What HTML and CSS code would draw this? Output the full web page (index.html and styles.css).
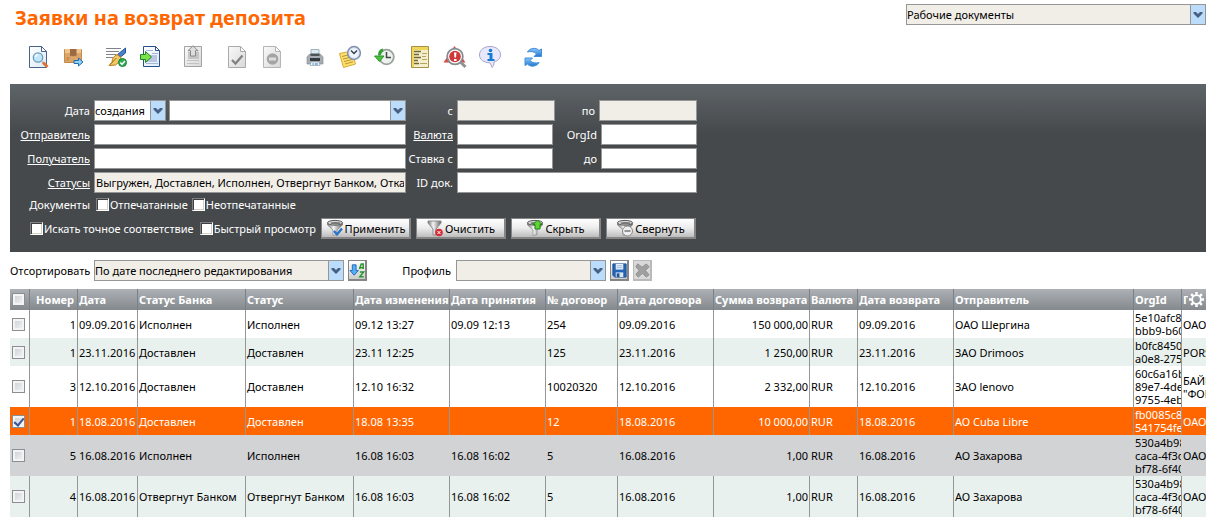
FILE: index.html
```html
<!DOCTYPE html>
<html lang="ru">
<head>
<meta charset="utf-8">
<title>Заявки на возврат депозита</title>
<link rel="stylesheet" href="styles.css">
</head>
<body>
<svg class="defs" width="0" height="0" aria-hidden="true">
  <defs>
    <linearGradient id="paper" x1="0" y1="0" x2="1" y2="1"><stop offset="0" stop-color="#fff"/><stop offset="1" stop-color="#dcebf8"/></linearGradient>
    <linearGradient id="paperGray" x1="0" y1="0" x2="1" y2="1"><stop offset="0" stop-color="#fafafa"/><stop offset="1" stop-color="#d8d8d8"/></linearGradient>
    <linearGradient id="blue" x1="0" y1="0" x2="0" y2="1"><stop offset="0" stop-color="#8cc8fa"/><stop offset="1" stop-color="#2277d0"/></linearGradient>
    <linearGradient id="metal" x1="0" y1="0" x2="1" y2="0"><stop offset="0" stop-color="#777"/><stop offset=".4" stop-color="#f4f4f4"/><stop offset="1" stop-color="#666"/></linearGradient>
    <symbol id="chevron" viewBox="0 0 14 19"><path d="M2.500 7H5l2 2 2-2h2.500v1.500L7 13 2.500 8.500z" fill="#476083"/></symbol>
    <symbol id="funnel" viewBox="0 0 18 18"><path d="M1.500 4v2l5.500 5v5.500l4-1v-4.500L16.500 6V4z" fill="url(#metal)" stroke="#777" stroke-width=".6"/><ellipse cx="9" cy="3.800" rx="7.500" ry="2.400" fill="#d8d8d8" stroke="#555"/><ellipse cx="9.500" cy="4.200" rx="5" ry="1.200" fill="#777"/></symbol>
  </defs>
</svg>

<header class="top">
  <h1 class="title">Заявки на возврат депозита</h1>
  <div class="combo combo-muted combo-docs">
    <select aria-label="Раздел документов"><option>Рабочие документы</option></select>
    <svg class="arrow"><use href="#chevron"/></svg>
  </div>
</header>

<nav class="toolbar" aria-label="Действия">
  <div class="tool-group">
    <button class="tool" aria-label="Просмотр"><svg viewBox="0 0 24 24"><path d="M3.500 1.500h12l5 5v16h-17z" fill="url(#paper)" stroke="#4b6389"/><path d="M15.500 1.500v5h5z" fill="#fff" stroke="#4b6389"/><circle cx="12" cy="12.500" r="4.700" fill="#bfe6fa" stroke="#6f9db8" stroke-width="1.300"/><path d="M9.500 12c.3-1.500 1.300-2.300 2.700-2.300" stroke="#fff" fill="none" stroke-width="1.300"/><path d="M15.500 16l1.500 1.500" stroke="#b8c4cc" stroke-width="2"/><path d="M17 17.500l4.500 4.500" stroke="#dd7032" stroke-width="2.800"/></svg></button>
    <button class="tool" aria-label="Отправить"><svg viewBox="0 0 24 24"><path d="M3.500 4.500h17v13h-17z" fill="#dba668" stroke="#c28a4c"/><path d="M4 4h16v4H4z" fill="#f0c48e"/><path d="M9 4h6.500v7.500L14 10.500l-1.700 1-1.600-1-1.700 1z" fill="#9b6a43"/><path d="M5.500 13h3m-3 2h2" stroke="#b47a3c"/><path d="M13 15.500h4.500v-2.500l4.500 4-4.500 4v-2.500H13z" fill="#8ed0fa" stroke="#236eb0"/></svg></button>
  </div>
  <div class="tool-group">
    <button class="tool" aria-label="Подписать"><svg viewBox="0 0 24 24"><path d="M2 3.500h15M2 6.500h13M2 9.500h10M2 12.500h7" stroke="#808488"/><path d="M21.500 3v5l-5 4-3-2.500z" fill="#4c80cc" stroke="#24549b"/><path d="M13 9.500l4 3-1.500 4-4 3.500-6.500.5 3-3c0-4 2-6.500 5-8z" fill="#f3c967" stroke="#bd7c16"/><path d="M6 19.500l6.500-6.500" stroke="#9b6a13"/><circle cx="18.500" cy="17.500" r="4" fill="#2cad4c" stroke="#158536"/><path d="M16.300 17.500l1.700 1.800 3-3.300" fill="none" stroke="#fff" stroke-width="1.500"/></svg></button>
    <button class="tool" aria-label="Импорт"><svg viewBox="0 0 24 24"><path d="M4.500 1.500h12l4 4v16h-16z" fill="url(#paper)" stroke="#29508b"/><path d="M16.500 1.500v4h4z" fill="#fff" stroke="#29508b"/><path d="M7 5.500h7M13 8.500h6M7 18.500h12" stroke="#a5b6d8"/><path d="M8 10h10v7H8z" fill="#b8c5e3"/><path d="M1.500 9.500h5V6.500l6 5.500-6 5.500v-3h-5z" fill="#7be34a" stroke="#238626"/></svg></button>
  </div>
  <div class="tool-group">
    <button class="tool" aria-label="Экспорт" disabled><svg viewBox="0 0 24 24"><path d="M2.500 1.500h17v20h-17z" fill="url(#paperGray)" stroke="#a3a3a3"/><path d="M5 15.500h12M5 18.500h12" stroke="#c3c3c3"/><path d="M6 7h11v7H6z" fill="#c5c5c5"/><path d="M11 .7l5 5h-2.500V11h-5V5.700H6z" fill="#ddd" stroke="#888"/></svg></button>
  </div>
  <div class="tool-group">
    <button class="tool" aria-label="Проверить" disabled><svg viewBox="0 0 24 24"><path d="M3.500 1.500h12l5 5v16h-17z" fill="url(#paperGray)" stroke="#aaa"/><path d="M15.500 1.500v5h5z" fill="#fff" stroke="#aaa"/><path d="M7 15l3.500 3.500 7-8" fill="none" stroke="#828282" stroke-width="2.300"/></svg></button>
    <button class="tool" aria-label="Отозвать" disabled><svg viewBox="0 0 24 24"><path d="M3.500 1.500h12l5 5v16h-17z" fill="url(#paperGray)" stroke="#b5b5b5"/><path d="M15.500 1.500v5h5z" fill="#fff" stroke="#b5b5b5"/><circle cx="12.500" cy="14" r="5.800" fill="#a5a5a5"/><path d="M9 12.500h7v3H9z" fill="#ddd"/></svg></button>
  </div>
  <div class="tool-group">
    <button class="tool" aria-label="Печать"><svg viewBox="0 0 24 24"><path d="M8 4.500h8v7H8z" fill="#dceaf1" stroke="#a0b2bb"/><path d="M6 9.500h12l2 2.500v7H4v-7z" fill="#a6acb1" stroke="#8a9197" stroke-width=".7"/><path d="M7.500 8.500h9V11h-9z" fill="#4c5357"/><path d="M7 13h10v3H7z" fill="#353a3e"/><path d="M8 17h8l1 3.500H7z" fill="#f7fbff" stroke="#91a0a8" stroke-width=".7"/><path d="M9 19h2.500" stroke="#23b5cf"/><path d="M12 19h3" stroke="#2e6ad0"/></svg></button>
    <button class="tool" aria-label="Запланировать"><svg viewBox="0 0 24 24"><path d="M1.500 8.500l12-2.500 4 13-12 3.500z" fill="#ffe06c" stroke="#d4ab35"/><path d="M4 11.500l8-2M5 14l9-2M6 16.500l9-2.200M7 19l8-2.200" stroke="#b99336"/><circle cx="16" cy="8" r="6.400" fill="#d7e3f5" stroke="#8091ad" stroke-width="1.500"/><circle cx="16" cy="8" r="4.500" fill="#f0f5fc"/><path d="M13 5.500l3 3 3-3" fill="none" stroke="#303a4c" stroke-width="1.300"/></svg></button>
    <button class="tool" aria-label="История"><svg viewBox="0 0 24 24"><circle cx="13.500" cy="12" r="7.300" fill="#edf2ef" stroke="#9aa39e" stroke-width="1.800"/><path d="M13.500 7v5.500H18" fill="none" stroke="#444" stroke-width="1.500"/><path d="M10 5C8 5.500 6.500 7.500 6.500 10" fill="none" stroke="#33a32f" stroke-width="3"/><path d="M1.500 11h9.500l-4.500 5.500z" fill="#48c33d" stroke="#2b922a"/></svg></button>
    <button class="tool" aria-label="Реестр"><svg viewBox="0 0 24 24"><path d="M3.500 1.500h17v21h-17z" fill="#f3eecb" stroke="#a89144"/><path d="M4 2h16v3H4zM4 2h2v20H4z" fill="#efd659"/><path d="M6 6.500h7M6 9.500h5M6 12.500h7M6 15.500h4M6 18.500h5" stroke="#746631" stroke-width="1.500"/><path d="M14 8.500h5M14 11.500h4M14 14.500h5M12 18.500h7" stroke="#b5a461"/></svg></button>
    <button class="tool" aria-label="Найти ошибки"><svg viewBox="0 0 24 24"><path d="M11.500 1l11 16.500h-22z" fill="#db4947"/><circle cx="12" cy="11.500" r="7.800" fill="#fff" stroke="#858b8e" stroke-width="1.800"/><circle cx="12" cy="11.500" r="5.800" fill="#cf393a"/><path d="M11 7.500h2.500l-.5 5h-1.500zM11 14h2.500v2H11z" fill="#fff"/><path d="M17.500 17l5 5" stroke="#8e9496" stroke-width="3"/></svg></button>
    <button class="tool" aria-label="Справка"><svg viewBox="0 0 24 24"><path d="M12 1.500c6 0 10.500 3.300 10.500 8.300 0 3.500-2.500 6-6.500 7.200.2 2.500-.5 4.500-2 5.500-1-1.800-1-3.500-2-4.700C5.500 17.500 1.500 14.500 1.500 10 1.500 5 6 1.500 12 1.500z" fill="#e8e8fc" stroke="#a6a2c8"/><circle cx="12.500" cy="5.500" r="1.800" fill="#177bd4"/><path d="M9.500 8h5v6h2v2h-7v-2h2v-4h-2z" fill="#177bd4"/></svg></button>
  </div>
  <div class="tool-group">
    <button class="tool" aria-label="Обновить"><svg viewBox="0 0 24 24"><path d="M6.500 7c2-4 8.500-5 11.500-1.500L20.500 4v7.500H13l2.500-2.500C13.500 6.500 9.500 6 6.500 7z" fill="url(#blue)" stroke="#408ed8"/><path d="M18 17.500c-2 4-8.500 5-11.500 1.500L4 20.500V13h7.500L9 15.500c2 2.500 6 3 9 2z" fill="url(#blue)" stroke="#408ed8"/></svg></button>
  </div>
</nav>

<form class="filter">
  <div class="line">
    <label class="name" for="period">Дата</label>
    <div class="wide">
      <div class="combo combo-kind"><select aria-label="Вид даты"><option>создания</option></select><svg class="arrow"><use href="#chevron"/></svg></div>
      <div class="combo combo-fill"><select id="period"><option></option></select><svg class="arrow"><use href="#chevron"/></svg></div>
    </div>
    <label class="name name-mid" for="from">с</label>
    <div class="pair"><input class="field field-date" id="from" readonly><label for="to">по</label><input class="field field-date" id="to" readonly></div>
  </div>
  <div class="line">
    <a class="name" href="#sender">Отправитель</a>
    <input class="field wide" id="sender" aria-label="Отправитель">
    <a class="name name-mid" href="#currency">Валюта</a>
    <div class="pair"><input class="field" id="currency" aria-label="Валюта"><label for="org">OrgId</label><input class="field" id="org"></div>
  </div>
  <div class="line">
    <a class="name" href="#receiver">Получатель</a>
    <input class="field wide" id="receiver" aria-label="Получатель">
    <label class="name name-mid" for="rate">Ставка с</label>
    <div class="pair"><input class="field" id="rate"><label for="rate-to">до</label><input class="field" id="rate-to"></div>
  </div>
  <div class="line">
    <a class="name" href="#statuses">Статусы</a>
    <input class="field wide" id="statuses" aria-label="Статусы" readonly value="Выгружен, Доставлен, Исполнен, Отвергнут Банком, Отказан">
    <label class="name name-mid" for="docid">ID док.</label>
    <div class="pair"><input class="field field-fill" id="docid"></div>
  </div>
  <div class="line line-docs">
    <span class="name">Документы</span>
    <div class="checks"><label><input type="checkbox">Отпечатанные</label><label><input type="checkbox">Неотпечатанные</label></div>
  </div>
  <div class="line line-actions">
    <div class="checks"><label><input type="checkbox">Искать точное соответствие</label><label><input type="checkbox">Быстрый просмотр</label></div>
    <div class="actions">
      <button type="button" class="action"><svg viewBox="0 0 18 18"><use href="#funnel"/><path d="M8 12l3 3.500 5-6" fill="none" stroke="#2874c8" stroke-width="2.300"/></svg>Применить</button>
      <button type="button" class="action"><svg viewBox="0 0 18 18"><path d="M2 2h13v2l-5 6v6H7v-6L2 4z" fill="url(#metal)" stroke="#8a8a90"/><circle cx="13" cy="13.500" r="3.800" fill="#d42d37"/><path d="M11.500 12l3 3m0-3l-3 3" stroke="#fff"/></svg>Очистить</button>
      <button type="button" class="action"><svg viewBox="0 0 18 18"><use href="#funnel"/><path d="M11.500 1l4.500 4.500h-2V10H9V5.500H7z" fill="#5fd52f" stroke="#23831b"/></svg>Скрыть</button>
      <button type="button" class="action"><svg viewBox="0 0 18 18"><use href="#funnel"/><circle cx="11.500" cy="12" r="5" fill="#eee" stroke="#888"/><path d="M8.500 12h6" stroke="#777" stroke-width="1.500"/></svg>Свернуть</button>
    </div>
  </div>
</form>

<div class="sortbar">
  <label class="sort-name" for="sort">Отсортировать</label>
  <div class="combo combo-muted combo-sort"><select id="sort"><option>По дате последнего редактирования</option></select><svg class="arrow"><use href="#chevron"/></svg></div>
  <button class="square" aria-label="Направление сортировки"><svg viewBox="0 0 18 18"><path d="M3.500 3h4v6H10l-4.500 5L1 9h2.500z" fill="#52aff4" stroke="#2568b4"/><path d="M11 7.500l2-5.500h2v5.500M12 6h3M11.500 10.500h4l-4 5h4" fill="none" stroke="#29962d" stroke-width="1.600"/></svg></button>
  <label class="profile-name" for="profile">Профиль</label>
  <div class="combo combo-muted combo-profile"><select id="profile"><option></option></select><svg class="arrow"><use href="#chevron"/></svg></div>
  <button class="square" aria-label="Сохранить профиль"><svg viewBox="0 0 18 18"><path d="M2 2h14v14H4l-2-2z" fill="#2464b4" stroke="#194d93"/><path d="M5 2h8v6H5z" fill="#e8f2fc"/><path d="M6 4h6M6 6h6" stroke="#a0b7d1"/><path d="M5 11h8v5H5z" fill="#d9e5f2"/><path d="M6 12h3v4H6z" fill="#285890"/></svg></button>
  <button class="square square-off" aria-label="Удалить профиль" disabled><svg viewBox="0 0 18 18"><path d="M4 2l4.500 3.500L13 2l3 3-4 4 4 4.500-3 2.500-4-4-4.500 4L2 13l3.500-4L2 5z" fill="#a0a0a0" stroke="#8c8c8c"/></svg></button>
</div>

<table class="grid">
  <colgroup><col class="w20"><col class="w48"><col class="w60"><col class="w108"><col class="w108"><col class="w96"><col class="w96"><col class="w72"><col class="w96"><col class="w96"><col class="w48"><col class="w96"><col><col class="w48"><col class="w24"></colgroup>
  <thead><tr>
    <th><input type="checkbox" aria-label="Выбрать все"></th><th class="num">Номер</th><th>Дата</th><th>Статус Банка</th><th>Статус</th><th>Дата изменения</th><th>Дата принятия</th><th>№ договор</th><th>Дата договора</th><th>Сумма возврата</th><th>Валюта</th><th>Дата возврата</th><th>Отправитель</th><th>OrgId</th>
    <th><div class="last-head"><span>Получатель</span><button class="gear" aria-label="Настройка колонок"><svg viewBox="0 0 18 18"><g stroke="#fff" stroke-width="2.600"><path d="M9 1v3M9 14v3M1 9h3M14 9h3M3.300 3.300l2.200 2.200M12.500 12.500l2.200 2.200M14.700 3.300l-2.200 2.200M5.500 12.500l-2.200 2.200"/></g><circle cx="9" cy="9" r="4.600" fill="none" stroke="#fff" stroke-width="2"/></svg></button></div></th>
  </tr></thead>
  <tbody>
    <tr><td><input type="checkbox" aria-label="Выбрать"></td><td class="num">1</td><td>09.09.2016</td><td>Исполнен</td><td>Исполнен</td><td>09.12 13:27</td><td>09.09 12:13</td><td>254</td><td>09.09.2016</td><td class="num">150 000,00</td><td>RUR</td><td>09.09.2016</td><td>ОАО Шергина</td><td>5e10afc8<br>bbb9-b60</td><td>ОАО</td></tr>
    <tr class="alt"><td><input type="checkbox" aria-label="Выбрать"></td><td class="num">1</td><td>23.11.2016</td><td>Доставлен</td><td>Доставлен</td><td>23.11 12:25</td><td></td><td>125</td><td>23.11.2016</td><td class="num">1 250,00</td><td>RUR</td><td>23.11.2016</td><td>ЗАО Drimoos</td><td>b0fc8450<br>a0e8-275</td><td>PORS</td></tr>
    <tr><td><input type="checkbox" aria-label="Выбрать"></td><td class="num">3</td><td>12.10.2016</td><td>Доставлен</td><td>Доставлен</td><td>12.10 16:32</td><td></td><td>10020320</td><td>12.10.2016</td><td class="num">2 332,00</td><td>RUR</td><td>12.10.2016</td><td>ЗАО lenovo</td><td>60c6a16b<br>89e7-4de<br>9755-4eb</td><td>БАЙН<br>"ФОН</td></tr>
    <tr class="selected"><td><input type="checkbox" aria-label="Выбрать" checked></td><td class="num">1</td><td>18.08.2016</td><td>Доставлен</td><td>Доставлен</td><td>18.08 13:35</td><td></td><td>12</td><td>18.08.2016</td><td class="num">10 000,00</td><td>RUR</td><td>18.08.2016</td><td>АО Cuba Libre</td><td>fb0085c8<br>541754fe</td><td>ОАО</td></tr>
    <tr class="hovered"><td><input type="checkbox" aria-label="Выбрать"></td><td class="num">5</td><td>16.08.2016</td><td>Исполнен</td><td>Исполнен</td><td>16.08 16:03</td><td>16.08 16:02</td><td>5</td><td>16.08.2016</td><td class="num">1,00</td><td>RUR</td><td>16.08.2016</td><td>АО Захарова</td><td>530a4b98<br>caca-4f3d<br>bf78-6f40</td><td>ОАО</td></tr>
    <tr class="alt"><td><input type="checkbox" aria-label="Выбрать"></td><td class="num">4</td><td>16.08.2016</td><td>Отвергнут Банком</td><td>Отвергнут Банком</td><td>16.08 16:03</td><td>16.08 16:02</td><td>5</td><td>16.08.2016</td><td class="num">1,00</td><td>RUR</td><td>16.08.2016</td><td>АО Захарова</td><td>530a4b98<br>caca-4f3d<br>bf78-6f40</td><td>ОАО</td></tr>
  </tbody>
</table>
</body>
</html>
```
FILE: styles.css
```css
* { box-sizing: border-box; }
body { margin: 0; padding-left: 10px; background: #fff; color: #000; font: 11px/13px "Noto Sans", sans-serif; }
button, input, select { font: inherit; color: inherit; margin: 0; padding: 0; border-radius: 0; }
svg { display: block; }
.defs { position: absolute; }

.top { display: flex; justify-content: space-between; align-items: flex-start; padding-top: 4px; height: 36px; }
.title { margin: 0; padding: 2px 0 0 5px; font: bold 20px/24px "Noto Sans", sans-serif; color: #f60; white-space: nowrap; }

.combo { display: grid; grid-template-columns: 1fr 15px; height: 21px; border: 1px solid #969696; background: #fff; color: #000; }
.combo select { grid-area: 1 / 1 / 2 / 3; width: 100%; height: 19px; min-width: 0; appearance: none; border: 0; background: transparent; }
.combo .arrow { grid-area: 1 / 2; width: 15px; height: 19px; background: #bbdcfb; border-left: 1px solid #969696; pointer-events: none; }
.combo-muted { background: #f1eee8; }
.combo-docs { width: 300px; }
.combo-kind { width: 72px; }
.combo-fill { flex: 1; }
.combo-sort { width: 250px; }
.combo-profile { width: 150px; }

.toolbar { display: flex; gap: 8px; padding-left: 10px; height: 48px; align-items: flex-start; }
.tool-group { display: flex; padding-top: 9px; }
.tool { width: 35px; height: 24px; border: 0; background: none; display: grid; place-items: center; }
.tool svg { width: 24px; height: 24px; }

.filter { display: flex; flex-direction: column; gap: 3px; padding: 16px 0 13px; color: #fff; background: linear-gradient(#5f6468, #45494c 50px); }
.line { display: flex; align-items: center; height: 21px; }
.name { width: 84px; padding-right: 4px; text-align: right; color: #fff; white-space: nowrap; }
.name-mid { width: 51px; }
.wide { width: 312px; display: flex; gap: 3px; }
.field { width: 96px; height: 21px; padding: 0 1px; border: 1px solid #969696; background: #fff; color: #000; }
.field.wide { width: 312px; }
.field[readonly] { background: #f1eee8; }
.field-date { width: 98px; }
.field-fill { flex: 1; }
.pair { width: 240px; display: flex; align-items: center; }
.pair label { flex: 1; padding-right: 4px; text-align: right; }
.line-docs { height: 17px; margin-bottom: 2px; }
.line-docs .checks { padding-left: 2px; }
.checks { display: flex; gap: 4px; white-space: nowrap; }
.checks label { display: flex; align-items: center; gap: 1px; }
.checks input { appearance: none; width: 13px; height: 13px; background: #fff; border: 1px solid; border-color: #808080 #fff #fff #808080; box-shadow: inset 1px 1px #404040, inset -1px -1px #d4d0c8; }
.line-actions { padding-left: 20px; }
.line-actions .checks { width: 291px; gap: 6px; }
.actions { display: flex; gap: 5px; }
.action { width: 90px; height: 21px; display: flex; align-items: center; justify-content: center; gap: 1px; color: #000; border: solid #858585; border-width: 1px 2px 2px 1px; background: linear-gradient(#fff, #ececec 50%, #bdbdbd); }
.action svg { width: 18px; height: 18px; }

.sortbar { display: flex; align-items: center; gap: 4px; padding: 8px 0; }
.sort-name { width: 80px; white-space: nowrap; }
.profile-name { width: 81px; padding-right: 1px; text-align: right; }
.square { width: 19px; height: 21px; display: grid; place-items: center; border: solid #858585; border-width: 1px 2px 2px 1px; background: linear-gradient(#fff, #ccc); }
.square svg { width: 17px; height: 17px; }
.square-off { border-color: #b9b9b9; background: #d9d9d9; }

.grid { width: 100%; table-layout: fixed; border-collapse: separate; border-spacing: 0; }
.w20 { width: 20px; } .w24 { width: 24px; } .w48 { width: 48px; } .w60 { width: 60px; } .w72 { width: 72px; } .w96 { width: 96px; } .w108 { width: 108px; }
.grid th, .grid td { padding: 1px 0 1px 1px; text-align: left; white-space: nowrap; overflow: hidden; border-right: 1px solid #969696; }
.grid th:first-child, .grid td:first-child { padding-left: 2px; }
.grid th:last-child, .grid td:last-child { border-right: 0; }
.grid th { height: 21px; padding-right: 1px; color: #fff; background: linear-gradient(#adb1b5, #84898d); border-right-color: #7d8185; }
.grid .num { text-align: right; padding-right: 1px; }
.grid th.num { padding-right: 3px; }
.grid tbody td { height: 28px; }
.alt { background: #e9f1ee; }
.selected { background: #f60; color: #fff; }
.hovered { background: #d2d3d5; }
.grid .hovered td { border-right-color: transparent; }
.grid input { appearance: none; display: block; width: 13px; height: 13px; border: 1px solid #8b8f93; background: linear-gradient(135deg, #c9ced3, #f5f5f5); box-shadow: inset 0 0 0 2px #f4f4f4; }
.grid input:checked { display: grid; place-items: center; }
.grid input:checked::before { content: ""; width: 4px; height: 8px; border: solid #36569b; border-width: 0 2px 2px 0; rotate: 40deg; }
.last-head { display: flex; align-items: center; }
.last-head span { flex: 1; min-width: 0; overflow: hidden; }
.gear { width: 17px; height: 17px; border: 0; background: none; }
.gear svg { width: 17px; height: 17px; }
```
